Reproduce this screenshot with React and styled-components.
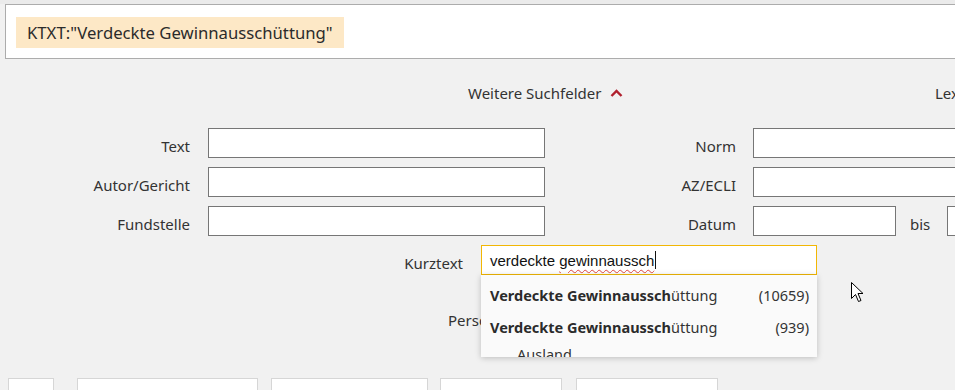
import React from "react";
import styled, { createGlobalStyle } from "styled-components";

const GlobalStyle = createGlobalStyle`
  html, body {
    margin: 0;
    padding: 0;
    background: #f1f1f1;
    overflow: hidden;
  }
  body {
    font-family: "Noto Sans", "Open Sans", sans-serif;
    color: #333;
  }
`;

const Page = styled.div`
  position: relative;
  width: 955px;
  height: 390px;
  overflow: hidden;
  background: #f1f1f1;
`;

const TopBand = styled.div`
  height: 4px;
  background: #ebebeb;
`;

const SearchBar = styled.div`
  margin-left: 5px;
  height: 55px;
  box-sizing: border-box;
  border: 1px solid #acacac;
  border-right: none;
  background: #fff;
  padding: 12px 10px;
`;

const QueryTag = styled.span`
  display: inline-block;
  height: 31px;
  line-height: 31px;
  padding: 0 11px;
  background: #fde8c6;
  font-size: 16.7px;
  color: #2b2b2b;
`;

const ToggleRow = styled.div`
  display: grid;
  grid-template-columns: 935px 1fr;
  align-items: center;
  height: 28px;
  margin-top: 20px;
  font-size: 15px;
  color: #333;
`;

const Toggle = styled.div`
  display: flex;
  align-items: center;
  gap: 9px;
  padding-left: 468px;
`;

const Fields = styled.div`
  display: flex;
  margin-top: 21px;
`;

const Column = styled.div`
  display: flex;
  flex-direction: column;
  gap: 9px;
  width: ${(p) => p.$width || "auto"};
  flex: ${(p) => (p.$width ? "none" : "1")};
  overflow: hidden;
`;

const Row = styled.div`
  display: flex;
  align-items: center;
  height: 30px;
  margin-top: ${(p) => p.$top || 0}px;
`;

const Label = styled.label`
  flex: none;
  width: ${(p) => p.$width}px;
  margin-right: ${(p) => p.$gap || 18}px;
  text-align: ${(p) => p.$align || "right"};
  padding-left: ${(p) => p.$indent || 0}px;
  padding-top: 5px;
  box-sizing: border-box;
  font-size: 15px;
  color: #333;
  white-space: nowrap;
`;

const Field = styled.div`
  flex: none;
  position: relative;
  width: ${(p) => p.$width}px;
  height: 30px;
  box-sizing: border-box;
  background: #fff;
  border: 1px solid ${(p) => (p.$active ? "#f2b705" : "#767676")};
  display: flex;
  align-items: center;
  padding-left: 8px;
`;

const Bis = styled.span`
  font-size: 15px;
  padding-top: 5px;
  margin: 0 17px 0 14px;
`;

const Typed = styled.span`
  font-family: "Liberation Sans", Arial, sans-serif;
  font-size: 15px;
  color: #111;
  white-space: pre;
`;

const Misspelled = styled.span`
  text-decoration: underline wavy #e0443e;
  text-decoration-thickness: 1px;
  text-underline-offset: 3px;
`;

const Caret = styled.span`
  display: inline-block;
  width: 1px;
  height: 18px;
  background: #111;
  margin-left: 1px;
`;

const Suggestions = styled.ul`
  position: absolute;
  left: -1px;
  top: 29px;
  width: 336px;
  height: 82px;
  margin: 0;
  padding: 0;
  list-style: none;
  background: #fafafa;
  box-shadow: 0 1px 6px rgba(0, 0, 0, 0.22);
  overflow: hidden;
  z-index: 2;
`;

const Suggestion = styled.li`
  padding: 10px 8px 2px 9px;
  font-size: 14.5px;
  color: #333;
`;

const SuggestionLine = styled.div`
  display: flex;
  justify-content: space-between;
  height: 20px;
  line-height: 20px;
`;

const Strong = styled.b`
  font-weight: 700;
  color: #2b2b2b;
`;

const Sub = styled.div`
  margin-top: 7px;
  padding-left: 27px;
  line-height: 20px;
`;

const Tabs = styled.div`
  display: flex;
  margin-top: 46px;
  padding-left: 8px;
`;

const Tab = styled.div`
  width: ${(p) => p.$width}px;
  height: 30px;
  margin-right: ${(p) => p.$gap}px;
  box-sizing: border-box;
  background: #fff;
  border: 1px solid #d6d6d6;
  flex: none;
`;

const Pointer = styled.svg`
  position: absolute;
  left: 851px;
  top: 282px;
`;

const Chevron = () => (
  <svg width="13" height="8" viewBox="0 0 13 8">
    <path d="M1.5 7 L6.5 2 L11.5 7" fill="none" stroke="#b0202e" strokeWidth="2.4" />
  </svg>
);

const suggestions = [
  { bold: "Verdeckte Gewinnaussch", rest: "üttung", count: 10659 },
  { bold: "Verdeckte Gewinnaussch", rest: "üttung", count: 939, sub: "Ausland" },
];

const tabs = [
  { width: 46, gap: 23 },
  { width: 181, gap: 13 },
  { width: 157, gap: 12 },
  { width: 122, gap: 14 },
  { width: 142, gap: 0 },
];

export default function App() {
  return (
    <Page>
      <GlobalStyle />
      <TopBand />
      <SearchBar>
        <QueryTag>KTXT:"Verdeckte Gewinnausschüttung"</QueryTag>
      </SearchBar>

      <ToggleRow>
        <Toggle>
          Weitere Suchfelder <Chevron />
        </Toggle>
        <span>Lexikon</span>
      </ToggleRow>

      <Fields>
        <Column $width="545px">
          <Row>
            <Label $width={190}>Text</Label>
            <Field $width={337} />
          </Row>
          <Row>
            <Label $width={190}>Autor/Gericht</Label>
            <Field $width={337} />
          </Row>
          <Row>
            <Label $width={190}>Fundstelle</Label>
            <Field $width={337} />
          </Row>
        </Column>
        <Column>
          <Row>
            <Label $width={191} $gap={17}>Norm</Label>
            <Field $width={300} />
          </Row>
          <Row>
            <Label $width={191} $gap={17}>AZ/ECLI</Label>
            <Field $width={300} />
          </Row>
          <Row>
            <Label $width={191} $gap={17}>Datum</Label>
            <Field $width={143} />
            <Bis>bis</Bis>
            <Field $width={100} />
          </Row>
        </Column>
      </Fields>

      <Row $top={9}>
        <Label $width={463}>Kurztext</Label>
        <Field $width={336} $active>
          <Typed>
            verdeckte <Misspelled>gewinnaussch</Misspelled>
          </Typed>
          <Caret />
          <Suggestions>
            {suggestions.map((s, i) => (
              <Suggestion key={i}>
                <SuggestionLine>
                  <span>
                    <Strong>{s.bold}</Strong>
                    {s.rest}
                  </span>
                  <span>({s.count})</span>
                </SuggestionLine>
                {s.sub && <Sub>{s.sub}</Sub>}
              </Suggestion>
            ))}
          </Suggestions>
        </Field>
      </Row>

      <Row $top={27}>
        <Label $width={560} $align="left" $indent={448}>Personen</Label>
      </Row>

      <Tabs>
        {tabs.map((t, i) => (
          <Tab key={i} $width={t.width} $gap={t.gap} />
        ))}
      </Tabs>

      <Pointer width="13" height="22" viewBox="0 0 13 22">
        <path
          d="M0.5 0.5 L0.5 16.5 L4.5 12.5 L7.5 19.5 L10 18.5 L7 11.5 L12 11.5 Z"
          fill="#fff"
          stroke="#000"
          strokeWidth="1"
        />
      </Pointer>
    </Page>
  );
}
